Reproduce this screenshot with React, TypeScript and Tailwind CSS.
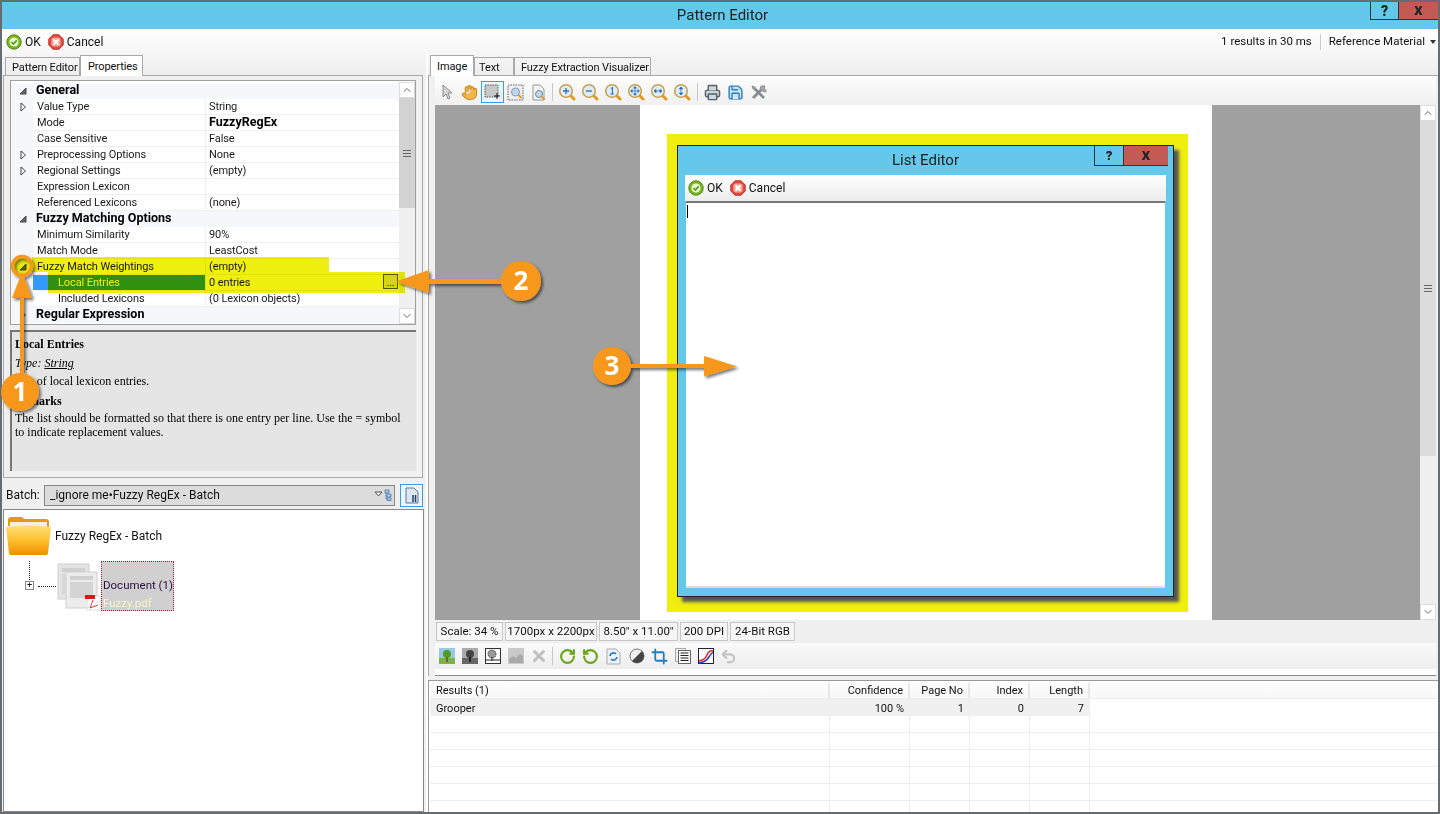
import React from 'react';
import { ChevronUp, ChevronDown, Hand, Printer, Save, X, RotateCw, RotateCcw, Undo2, Crop } from 'lucide-react';

const sans = "font-['Roboto',sans-serif]";

const OkIcon = ({ s = 16 }: { s?: number }) => (
  <svg width={s} height={s} viewBox="0 0 16 16">
    <circle cx="8" cy="8" r="7.2" fill="#7ab51d" stroke="#4c8a12" />
    <circle cx="8" cy="8" r="4.6" fill="#e8f5d0" />
    <path d="M5.4 8l2 2 3.4-3.6" fill="none" stroke="#5c9a18" strokeWidth="1.7" />
  </svg>
);

const CancelIcon = ({ s = 16 }: { s?: number }) => (
  <svg width={s} height={s} viewBox="0 0 16 16">
    <path d="M5 .8h6L15.2 5v6L11 15.2H5L.8 11V5z" fill="#e8483c" stroke="#b9342a" />
    <rect x="3.4" y="3.4" width="9.2" height="9.2" rx="2.5" fill="#f6a39a" />
    <path d="M5.5 5.5l5 5m0-5l-5 5" stroke="#fff" strokeWidth="2" />
  </svg>
);

const Lens = ({ glyph }: { glyph: string }) => (
  <svg width="18" height="18" viewBox="0 0 18 18">
    <path d="M11.5 11.5l4.5 4.5" stroke="#e59a1e" strokeWidth="3" strokeLinecap="round" />
    <circle cx="8" cy="8" r="6.3" fill="#dcecfa" stroke="#c9a04a" strokeWidth="1.5" />
    {glyph === 'plus' && <path d="M5 8h6M8 5v6" stroke="#2d6fb0" strokeWidth="1.3" />}
    {glyph === 'minus' && <path d="M5 8h6" stroke="#2d6fb0" strokeWidth="1.3" />}
    {glyph === 'one' && <path d="M7 5.5l1.4-.8v6.2M6.4 11h3.6" fill="none" stroke="#2d6fb0" strokeWidth="1.1" />}
    {glyph === 'fit' && <path d="M8 4v8M4 8h8M8 3.6l-1.4 1.6h2.8zM8 12.4l-1.4-1.6h2.8zM3.6 8l1.6-1.4v2.8zM12.4 8l-1.6-1.4v2.8z" fill="#2d6fb0" stroke="#2d6fb0" strokeWidth=".7" />}
    {glyph === 'width' && <path d="M4 8h8M4 8l2-1.6v3.2zM12 8l-2-1.6v3.2z" fill="#2d6fb0" stroke="#2d6fb0" strokeWidth=".8" />}
    {glyph === 'height' && <path d="M8 4v8M8 4L6.4 6h3.2zM8 12l-1.6-2h3.2z" fill="#2d6fb0" stroke="#2d6fb0" strokeWidth=".8" />}
  </svg>
);

const Slot = ({ children, className = '' }: { children: React.ReactNode; className?: string }) => (
  <div className={`flex h-[22px] w-[23px] shrink-0 items-center justify-center ${className}`}>{children}</div>
);

const Sep = () => <div className="mx-[2px] h-[18px] w-px shrink-0 bg-[#c8c8c8]" />;

const Tri = ({ open }: { open?: boolean }) =>
  open ? (
    <svg width="8" height="8" viewBox="0 0 8 8"><path d="M1 7h6V1z" fill="#666" stroke="#444" /></svg>
  ) : (
    <svg width="7" height="10" viewBox="0 0 7 10"><path d="M1 1l4.5 4L1 9z" fill="#fff" stroke="#444" /></svg>
  );

type GridRow = { name: string; value?: string; head?: boolean; arrow?: 'open' | 'closed'; bold?: boolean; sub?: boolean; sel?: boolean };

const gridRows: GridRow[] = [
  { name: 'General', head: true, arrow: 'open' },
  { name: 'Value Type', value: 'String', arrow: 'closed' },
  { name: 'Mode', value: 'FuzzyRegEx', bold: true },
  { name: 'Case Sensitive', value: 'False' },
  { name: 'Preprocessing Options', value: 'None', arrow: 'closed' },
  { name: 'Regional Settings', value: '(empty)', arrow: 'closed' },
  { name: 'Expression Lexicon', value: '' },
  { name: 'Referenced Lexicons', value: '(none)' },
  { name: 'Fuzzy Matching Options', head: true, arrow: 'open' },
  { name: 'Minimum Similarity', value: '90%' },
  { name: 'Match Mode', value: 'LeastCost' },
  { name: 'Fuzzy Match Weightings', value: '(empty)', arrow: 'open' },
  { name: 'Local Entries', value: '0 entries', sub: true, sel: true },
  { name: 'Included Lexicons', value: '(0 Lexicon objects)', sub: true },
  { name: 'Regular Expression', head: true, arrow: 'closed' },
];

const PropRow = ({ r }: { r: GridRow }) => {
  if (r.head) {
    return (
      <div className="flex h-[16px] items-center bg-[#f5f7fb] text-[12.5px] font-bold text-black">
        <div className="flex w-[22px] justify-center pl-[2px]"><Tri open={r.arrow === 'open'} /></div>
        <div className="pb-[2px] pl-[3px]">{r.name}</div>
      </div>
    );
  }
  return (
    <div className="flex h-[16px] items-center text-[11px] tracking-[-0.1px] text-[#1a1a1a]">
      <div className="flex h-full w-[22px] items-center justify-center bg-[#f5f7fb] pl-[2px]">
        {r.arrow && <Tri open={r.arrow === 'open'} />}
      </div>
      <div className={`flex h-full w-[173px] items-center border-r border-b border-[#f0f0f0] pb-px ${r.sub ? 'pl-[25px]' : 'pl-[4px]'} ${r.sel ? 'bg-[#3399ff] text-white' : ''}`}>
        {r.name}
      </div>
      <div className={`relative flex h-full flex-1 items-center border-b border-[#f0f0f0] pb-px pl-[3px] ${r.bold ? 'text-[12.5px] font-bold tracking-normal text-black' : ''}`}>
        {r.value}
        {r.sel && (
          <div className="absolute top-[-1px] right-[1px] flex h-[15px] w-[15px] items-end justify-center border border-[#555] bg-[#e2e2e2] text-[10px] leading-[10px]">...</div>
        )}
      </div>
    </div>
  );
};

const Scroll = ({ long }: { long?: boolean }) => (
  <div className="flex w-[16px] shrink-0 flex-col bg-[#f0f0f0]">
    <div className="flex h-[16px] items-center justify-center border border-[#ddd] bg-white"><ChevronUp size={12} color="#666" /></div>
    {long ? (
      <div className="flex h-[335px] items-center justify-center bg-[#dcdcdc]"><div className="h-[7px] w-[8px] border-y border-[#666] bg-[linear-gradient(#dcdcdc_40%,#666_40%,#666_60%,#dcdcdc_60%)]" /></div>
    ) : (
      <div className="flex h-[110px] items-center justify-center bg-[#d2d2d2]"><div className="h-[7px] w-[8px] border-y border-[#666] bg-[linear-gradient(#d2d2d2_40%,#666_40%,#666_60%,#d2d2d2_60%)]" /></div>
    )}
    <div className="flex-1" />
    <div className="flex h-[16px] items-center justify-center border border-[#ddd] bg-white"><ChevronDown size={12} color="#666" /></div>
  </div>
);

const FolderIcon = () => (
  <svg width="47" height="40" viewBox="0 0 47 40">
    <defs>
      <linearGradient id="fold" x1="0" y1="0" x2="0" y2="1">
        <stop offset="0" stopColor="#ffe07a" />
        <stop offset=".5" stopColor="#ffc02e" />
        <stop offset="1" stopColor="#f08c00" />
      </linearGradient>
    </defs>
    <path d="M3 10V4q0-3 3-3h10q2 0 3 2h22q3 0 3 3v6z" fill="#e39a14" />
    <rect x="5" y="6" width="37" height="6" fill="#f3efe2" />
    <path d="M1 11q22-3 45 0l-3 26q0 2-3 2H7q-3 0-3-2z" fill="url(#fold)" />
  </svg>
);

const DocStack = () => (
  <svg width="44" height="48" viewBox="0 0 44 48">
    <rect x="1" y="1" width="31" height="35" fill="#e4e4e4" stroke="#d0d0d0" />
    <rect x="5" y="5" width="23" height="4" fill="#d0d0d0" />
    <rect x="5" y="11" width="23" height="20" fill="#d8d8d8" />
    <rect x="9" y="9" width="31" height="36" fill="#ececec" stroke="#cfcfcf" />
    <rect x="13" y="13" width="23" height="4" fill="#d0d0d0" />
    <rect x="13" y="19" width="23" height="16" fill="#d4d4d4" />
    <rect x="30" y="33" width="13" height="14" fill="#fff" stroke="#ddd" />
    <rect x="28" y="32" width="10" height="4" fill="#e11" />
    <path d="M33 45q2-5 3-8m-3 8l8-3" stroke="#e33" fill="none" />
  </svg>
);

const resultCols = ['w-[400px]', 'w-[80px]', 'w-[60px]', 'w-[60px]', 'w-[60px]'];

const TabBtn = ({ label, active, className = '' }: { label: string; active?: boolean; className?: string }) => (
  <div className={`flex items-center border border-b-0 border-[#a9a9a9] text-[11px] tracking-[-0.1px] whitespace-nowrap ${active ? 'relative z-10 mt-[2px] h-[21px] self-start bg-white' : 'h-[18px] self-end pt-px'} ${className}`}>
    {label}
  </div>
);

const statusCell = 'flex h-[19px] items-center justify-center border border-[#c8c8c8] bg-[#f6f6f6] whitespace-nowrap';

const App: React.FC = () => {
  return (
    <div className={`relative h-[814px] w-[1440px] overflow-hidden text-[11.5px] leading-none text-[#111] ${sans}`}>
      <div className="flex h-full w-full flex-col border-2 border-[#666c70] bg-white">
        {/* Title bar */}
        <div className="relative flex h-[27px] shrink-0 items-center justify-center bg-[#64c8ea] pb-px pl-[5px] text-[15px] text-[#222]">
          Pattern Editor
          <div className="absolute top-0 right-0 flex h-[18px]">
            <div className="flex w-[28px] items-center justify-center border-b border-l border-[#333] text-[14px] font-black">?</div>
            <div className="flex w-[40px] items-center justify-center border-b border-l border-[#333] bg-[#c25b53] text-[13px] font-black">X</div>
          </div>
        </div>

        {/* Main toolbar */}
        <div className="flex h-[24px] shrink-0 items-center bg-[linear-gradient(#ffffff,#f6f6f6)] pt-px pr-[2px] pl-[4px] text-[12px]">
          <OkIcon /><span className="mr-[7px] ml-[3px]">OK</span>
          <CancelIcon /><span className="ml-[3px]">Cancel</span>
          <span className="ml-auto text-[11.5px]">1 results in 30 ms</span>
          <div className="mx-[8px] h-[16px] w-px bg-[#ccc]" />
          <span className="text-[11.5px]">Reference Material</span>
          <svg className="ml-[5px]" width="6" height="4" viewBox="0 0 6 4"><path d="M0 0h6L3 4z" fill="#333" /></svg>
        </div>

        <div className="flex min-h-0 flex-1">
          {/* Left column */}
          <div className="flex w-[424px] shrink-0 flex-col bg-[#f0f0f0]">
            <div className="flex h-[22px] shrink-0 bg-[linear-gradient(#f6f6f6,#eeeeee)] pl-[3px]">
              <TabBtn label="Pattern Editor" className="w-[75px] pl-[6px]" />
              <TabBtn label="Properties" active className="w-[63px] pl-[7px]" />
            </div>
            <div className="ml-[1px] flex h-[403px] w-[420px] shrink-0 flex-col border border-[#a9a9a9] bg-[#f0f0f0] px-[6px] pt-[4px]">
              <div className="flex h-[245px] w-[406px] shrink-0 border border-[#a0a0a0] bg-white pt-px">
                <div className="flex-1 pt-px">
                  {gridRows.map((r) => <PropRow key={r.name} r={r} />)}
                </div>
                <Scroll />
              </div>
              <div className="mt-[5px] h-[141px] w-[406px] shrink-0 border-t-2 border-l-2 border-[#777] bg-[#e5e5e5] pt-[5px] pl-[3px] font-['Liberation_Serif',serif] text-[12px] leading-[14px] text-black">
                <div className="font-bold">Local Entries</div>
                <div className="mt-[5px]"><i>Type: <u>String</u></i></div>
                <div className="mt-[4px]">List of local lexicon entries.</div>
                <div className="mt-[6px] font-bold">Remarks</div>
                <div className="mt-[3px] w-[395px]">The list should be formatted so that there is one entry per line. Use the = symbol to indicate replacement values.</div>
              </div>
            </div>
            <div className="flex h-[31px] shrink-0 items-center pt-[3px] pl-[4px]">
              <span className="w-[38px] text-[12px]">Batch:</span>
              <div className="flex h-[21px] w-[351px] items-center border border-[#888] bg-[#dcdcdc] pr-[2px] pl-[5px] text-[12px]">
                _ignore me•Fuzzy RegEx - Batch
                <svg className="ml-auto" width="18" height="12" viewBox="0 0 18 12">
                  <path d="M1 3h7L4.5 7z" fill="#eee" stroke="#555" />
                  <path d="M11 1h4v3h-4zM13 5h4v3h-4zM13 9h4v2.5h-4zM12 4v6h1" fill="#bcd" stroke="#47a" strokeWidth=".8" />
                </svg>
              </div>
              <div className="ml-[5px] flex h-[23px] w-[23px] items-center justify-center border border-[#3d9be9] bg-[#eef6fd]">
                <svg width="14" height="17" viewBox="0 0 14 17">
                  <path d="M1 1h8l4 4v11H1z" fill="#dbe6f2" stroke="#5a7b9c" />
                  <path d="M8 8v7M10.500 8v7" stroke="#246" strokeWidth="1.500" />
                </svg>
              </div>
            </div>
            <div className="relative ml-[1px] min-h-0 w-[421px] flex-1 border border-[#888] bg-white">
              <div className="flex items-center pt-[6px] pl-[1px] text-[12px]">
                <FolderIcon /><span className="ml-[3px]">Fuzzy RegEx - Batch</span>
              </div>
              {/* tree node sits on its own offset, as in the tree control */}
              <div className="flex items-start pt-[5px] pl-[21px]">
                <div className="relative h-[50px] w-[32px] shrink-0">
                  <div className="absolute top-0 left-[4px] h-[21px] border-l border-dotted border-[#222]" />
                  <div className="absolute top-[25px] left-[13px] w-[18px] border-t border-dotted border-[#222]" />
                  <div className="absolute top-[20px] left-0 flex h-[9px] w-[9px] items-center justify-center border border-[#888] bg-white text-[9px] leading-[7px]">+</div>
                </div>
                <div className="pt-[2px]"><DocStack /></div>
                <div className="h-[50px] w-[73px] border border-dotted border-[#a02040] bg-[#d0d0d0] pt-[18px] pl-[1px] text-[11.5px] whitespace-nowrap">
                  <div className="text-[#2a1040]">Document (1)</div>
                  <div className="mt-[6px] text-[#f6f6c8]">Fuzzy.pdf</div>
                </div>
              </div>
            </div>
          </div>

          {/* Right column */}
          <div className="ml-[2px] flex min-w-0 flex-1 flex-col bg-[#f0f0f0]">
            <div className="flex h-[22px] shrink-0 bg-[linear-gradient(#f6f6f6,#eeeeee)] pl-[2px]">
              <TabBtn label="Image" active className="w-[44px] pl-[6px]" />
              <TabBtn label="Text" className="w-[40px] pl-[4px]" />
              <TabBtn label="Fuzzy Extraction Visualizer" className="w-[137px] pl-[6px]" />
            </div>
            <div className="flex h-[601px] shrink-0 flex-col border-t border-l border-[#a9a9a9] pr-[2px] pl-[6px]">
              <div className="flex h-[29px] shrink-0 items-center bg-[linear-gradient(#fdfdfd,#f0f0f0)] pt-[3px]">
                <Slot>
                  <svg width="14" height="16" viewBox="0 0 14 16"><path d="M3 1l9 8H8l2 5-2 1-2-5-3 3z" fill="#d4d4d4" stroke="#8a8a8a" /></svg>
                </Slot>
                <Slot><Hand size={17} strokeWidth={1.5} fill="#f2b54a" color="#c98a20" /></Slot>
                <Slot className="border border-[#3d9be9] bg-[#eef6fd]">
                  <svg width="17" height="16" viewBox="0 0 17 16">
                    <rect x="1" y="1" width="13" height="12" fill="#c8c8c8" stroke="#555" strokeDasharray="1.500 1" />
                    <path d="M13 9v6M10 12h6" stroke="#111" />
                  </svg>
                </Slot>
                <Slot>
                  <svg width="17" height="17" viewBox="0 0 17 17">
                    <rect x="1" y="1" width="15" height="15" fill="#eee" stroke="#666" strokeDasharray="1.500 1" />
                    <circle cx="8.500" cy="8" r="4" fill="#bcd8f0" stroke="#8a9aa8" />
                    <path d="M11.500 11l3 3" stroke="#e59a1e" strokeWidth="2" />
                  </svg>
                </Slot>
                <Slot>
                  <svg width="16" height="17" viewBox="0 0 16 17">
                    <path d="M2 1h7l4 4v11H2z" fill="#f4f4f4" stroke="#999" />
                    <circle cx="8" cy="10" r="3.500" fill="#bcd8f0" stroke="#6f8699" />
                    <path d="M10.500 12.500l3 3" stroke="#e59a1e" strokeWidth="2" />
                  </svg>
                </Slot>
                <Sep />
                <Slot><Lens glyph="plus" /></Slot>
                <Slot><Lens glyph="minus" /></Slot>
                <Slot><Lens glyph="one" /></Slot>
                <Slot><Lens glyph="fit" /></Slot>
                <Slot><Lens glyph="width" /></Slot>
                <Slot><Lens glyph="height" /></Slot>
                <div className="w-[2px]" />
                <Sep />
                <div className="w-px" />
                <Slot><Printer size={17} fill="#cfd6dc" color="#55606a" /></Slot>
                <Slot><Save size={17} fill="#cfe4f6" color="#2a7fc0" /></Slot>
                <Slot>
                  <svg width="17" height="17" viewBox="0 0 17 17">
                    <path d="M3 14L13 4" stroke="#8f8f8f" strokeWidth="3" />
                    <path d="M14 14L5 5" stroke="#7a8a96" strokeWidth="2.500" />
                    <path d="M2 2l3 1 1 2-1 1-2-1zM11 2h4l-1 3 2 1v2l-4-1-2-2z" fill="#a8a8a8" stroke="#777" strokeWidth=".7" />
                  </svg>
                </Slot>
              </div>

              <div className="flex h-[515px] shrink-0 bg-white">
                <div className="w-[205px] bg-[#a0a0a0]" />
                <div className="w-[572px] pt-[29px] pl-[27px]">
                  <div className="h-[478px] w-[521px] bg-[#f0ee0e] pt-[11px] pl-[10px]">
                    <div className="flex h-[452px] w-[497px] flex-col border border-[#222] bg-[#64c8ea] px-[7px] shadow-[5px_5px_3px_#555]">
                      <div className="relative -mx-[7px] flex h-[29px] shrink-0 items-center justify-center text-[15px] text-[#222]">
                        List Editor
                        <div className="absolute top-0 right-[5px] flex h-[20px]">
                          <div className="flex w-[29px] items-center justify-center border-b border-l border-[#333] text-[13px] font-black">?</div>
                          <div className="flex w-[45px] items-center justify-center border-b border-l border-[#333] bg-[#c25b53] text-[13px] font-black">X</div>
                        </div>
                      </div>
                      <div className="flex h-[26px] shrink-0 items-center bg-[linear-gradient(#ffffff,#ececec)] pl-[3px] text-[12px]">
                        <OkIcon /><span className="mr-[7px] ml-[3px]">OK</span>
                        <CancelIcon /><span className="ml-[3px]">Cancel</span>
                      </div>
                      <div className="mx-px h-[387px] shrink-0 border-t-2 border-b-2 border-[#777] border-b-[#ddd] bg-white pt-[2px] pl-[1px]">
                        <div className="h-[13px] w-px bg-black" />
                      </div>
                    </div>
                  </div>
                </div>
                <div className="w-[208px] bg-[#a0a0a0]" />
                <Scroll long />
              </div>

              <div className="flex h-[22px] shrink-0 items-start gap-[2px] pt-[2px] pl-px text-[11.5px]">
                <div className={`${statusCell} w-[67px]`}>Scale: 34 %</div>
                <div className={`${statusCell} w-[92px]`}>1700px x 2200px</div>
                <div className={`${statusCell} w-[79px]`}>8.50" x 11.00"</div>
                <div className={`${statusCell} w-[48px]`}>200 DPI</div>
                <div className={`${statusCell} w-[65px]`}>24-Bit RGB</div>
              </div>

              <div className="mt-px flex h-[26px] shrink-0 items-center bg-[linear-gradient(#fafafa,#ededed)]">
                <Slot>
                  <svg width="16" height="16" viewBox="0 0 16 16">
                    <rect width="16" height="16" fill="#9cc6e8" /><rect y="10" width="16" height="6" fill="#7cb342" />
                    <circle cx="8" cy="6" r="4" fill="#4e9a2b" /><rect x="7" y="9" width="2" height="5" fill="#7a5a30" />
                  </svg>
                </Slot>
                <Slot>
                  <svg width="16" height="16" viewBox="0 0 16 16">
                    <rect width="16" height="16" fill="#aaa" /><rect y="10" width="16" height="6" fill="#666" />
                    <circle cx="8" cy="6" r="4" fill="#444" /><rect x="7" y="9" width="2" height="5" fill="#222" />
                  </svg>
                </Slot>
                <Slot>
                  <svg width="16" height="16" viewBox="0 0 16 16">
                    <rect x=".5" y=".5" width="15" height="15" fill="#fff" stroke="#333" />
                    <circle cx="7" cy="6" r="4" fill="#999" stroke="#222" strokeDasharray="1 1" /><path d="M7 9v4M1 12h14" stroke="#222" />
                  </svg>
                </Slot>
                <Slot>
                  <svg width="16" height="16" viewBox="0 0 16 16">
                    <rect width="16" height="16" fill="#c9c9c9" /><path d="M1 11l4-3 3 2 4-4 3 2v7H1z" fill="#aaa" />
                  </svg>
                </Slot>
                <Slot><X size={18} strokeWidth={4} color="#c0c0c0" /></Slot>
                <Sep />
                <div className="w-px" />
                <Slot><RotateCw size={17} strokeWidth={3} color="#6aa51c" /></Slot>
                <Slot><RotateCcw size={17} strokeWidth={3} color="#6aa51c" /></Slot>
                <Slot>
                  <svg width="15" height="17" viewBox="0 0 15 17">
                    <path d="M1 1h9l4 4v11H1z" fill="#eef3f8" stroke="#aaa" />
                    <path d="M4 8a3.500 3.500 0 016-2M11 9a3.500 3.500 0 01-6 2" fill="none" stroke="#2f80c8" strokeWidth="1.800" />
                  </svg>
                </Slot>
                <Slot>
                  <svg width="16" height="16" viewBox="0 0 16 16">
                    <circle cx="8" cy="8" r="7" fill="#eee" stroke="#777" />
                    <path d="M13 3a7 7 0 01-10 10z" fill="#444" />
                  </svg>
                </Slot>
                <Slot><Crop size={17} strokeWidth={2.500} color="#1f7fc4" /></Slot>
                <Slot>
                  <svg width="16" height="16" viewBox="0 0 16 16">
                    <rect x=".5" y=".5" width="10" height="13" fill="#eee" stroke="#aaa" />
                    <rect x="3.500" y="2.500" width="12" height="13" fill="#fff" stroke="#666" />
                    <path d="M5.500 5h8M5.500 7.500h8M5.500 10h8M5.500 12.500h8" stroke="#222" />
                  </svg>
                </Slot>
                <Slot>
                  <svg width="16" height="16" viewBox="0 0 16 16">
                    <rect x=".5" y=".5" width="15" height="15" fill="#fff" stroke="#223" />
                    <path d="M1 13Q7 12 9 7T15 3" fill="none" stroke="#e02020" strokeWidth="1.500" />
                    <path d="M1 15Q8 14 11 9T15 5" fill="none" stroke="#2040d0" strokeWidth="1.500" />
                  </svg>
                </Slot>
                <Slot><Undo2 size={17} strokeWidth={3} color="#c4c4c4" /></Slot>
              </div>
              <div className="flex-1 bg-white" />
              <div className="h-px shrink-0 bg-[#888]" />
            </div>

            <div className="h-[4px] shrink-0" />
            {/* Results grid */}
            <div className="min-h-0 flex-1 overflow-hidden border-t border-l border-[#999] bg-white pl-px text-[11px]">
              <div className="flex h-[18px] items-center border-b border-[#eee] bg-[linear-gradient(#fefefe,#f8f8f8)] pt-[2px]">
                {['Results (1)', 'Confidence', 'Page No', 'Index', 'Length'].map((h, i) => (
                  <div key={h} className={`flex h-full items-center border-r-2 border-[#e8e8e8] ${resultCols[i]} ${i === 0 ? 'pl-[6px]' : 'justify-end pr-[5px]'}`}>{h}</div>
                ))}
              </div>
              <div className="flex h-[17px] w-[660px] items-center bg-[#f0f0f0] pt-px">
                {['Grooper', '100 %', '1', '0', '7'].map((c, i) => (
                  <div key={i} className={`flex h-full items-center ${resultCols[i]} ${i === 0 ? 'pl-[6px]' : 'justify-end pr-[6px]'}`}>{c}</div>
                ))}
              </div>
              {[0, 1, 2, 3, 4, 5].map((row) => (
                <div key={row} className="flex h-[17px] border-b border-[#eee]">
                  {resultCols.map((w, i) => <div key={i} className={`h-full border-r border-[#eee] ${w}`} />)}
                </div>
              ))}
            </div>
          </div>
        </div>
      </div>

      {/* Yellow marker highlights drawn over the screenshot */}
      <div className="absolute top-[257px] left-[32px] h-[15px] w-[297px] bg-[#f0f010] mix-blend-multiply" />
      <div className="absolute top-[272px] left-[48px] h-[21px] w-[357px] bg-[#f0f010] mix-blend-multiply" />
      <div className="absolute top-[258px] left-[14px] h-[16px] w-[16px] rounded-full bg-[#f0f010] mix-blend-multiply" />

      {/* Callouts */}
      <svg className="absolute inset-0 pointer-events-none" width="1440" height="814" viewBox="0 0 1440 814">
        <defs>
          <filter id="sh" x="-30%" y="-30%" width="170%" height="170%">
            <feDropShadow dx="2" dy="2" stdDeviation="1.500" floodColor="#000" floodOpacity=".55" />
          </filter>
        </defs>
        <g filter="url(#sh)" fill="#f7981d">
          <circle cx="22" cy="266" r="9.500" fill="none" stroke="#f7981d" strokeWidth="3.500" />
          <path d="M20 290h4v90h-4zM22 272l10 26H12z" />
          <circle cx="20" cy="392" r="19" />
          <path d="M429 270v9h75v5h-75v9l-33-11.500z" />
          <circle cx="521" cy="281" r="20" />
          <path d="M625 364h79v-8l33 10.500-33 10v-8.500h-79z" />
          <circle cx="612" cy="366" r="19" />
        </g>
        <g fill="#fff" fontFamily="'Open Sans', sans-serif" fontWeight="700" fontSize="26" textAnchor="middle">
          <text x="20" y="401">1</text>
          <text x="521" y="290">2</text>
          <text x="612" y="375">3</text>
        </g>
      </svg>
    </div>
  );
};

export default App;
